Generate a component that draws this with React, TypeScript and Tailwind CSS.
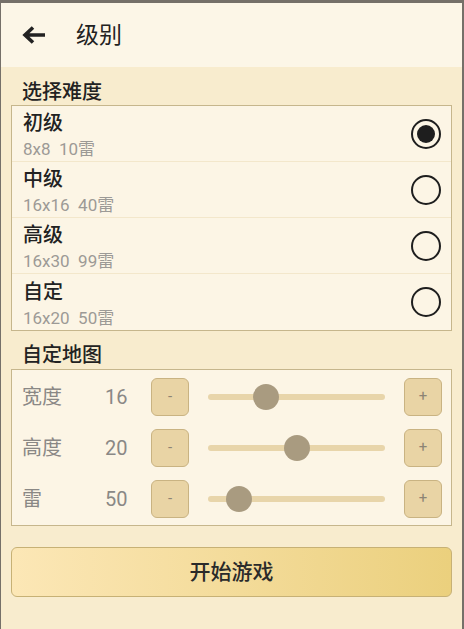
const levels = [
  { name: "初级", desc: "8x8  10雷", checked: true },
  { name: "中级", desc: "16x16  40雷", checked: false },
  { name: "高级", desc: "16x30  99雷", checked: false },
  { name: "自定", desc: "16x20  50雷", checked: false },
];

const sliders = [
  { label: "宽度", value: 16, pos: 0.3 },
  { label: "高度", value: 20, pos: 0.5 },
  { label: "雷", value: 50, pos: 0.12 },
];

function StepButton({ sign }: { sign: string }) {
  return (
    <button className="w-[38px] h-[38px] shrink-0 rounded-[6px] bg-[#e9d4a5] border border-[#c9b382] text-[#8d8474] text-[15px] leading-none flex items-center justify-center">
      {sign}
    </button>
  );
}

export default function App() {
  return (
    <div
      className="w-[464px] h-[629px] overflow-hidden flex flex-col bg-[#f8ecce] border-t-[3px] border-l border-r-2 border-[#757069]"
      style={{ fontFamily: 'Roboto, "Noto Sans CJK SC", sans-serif' }}
    >
      {/* Header */}
      <div className="h-[64px] shrink-0 bg-[#fcf6e7] flex items-center pl-[20px]">
        <svg width="26" height="20" viewBox="0 0 26 20" className="text-[#222]">
          <path d="M24 10H5M12 2.5L4 10l8 7.5" fill="none" stroke="currentColor" strokeWidth="3.6" />
        </svg>
        <span className="ml-[29px] text-[23px] leading-none text-[#222]">级别</span>
      </div>

      <div className="px-[10px] flex flex-col">
        {/* Difficulty */}
        <div className="mt-[13px] pl-[11px] text-[20px] leading-[25px] font-medium text-[#222]">选择难度</div>
        <div className="border border-[#c6b68c] bg-[#fcf5e5]">
          {levels.map((lv, i) => (
            <div
              key={lv.name}
              className={`h-[56px] flex items-center justify-between pl-[11px] pr-[10px] ${i < levels.length - 1 ? "border-b border-[#f3e7cb]" : ""}`}
            >
              <div className="flex flex-col gap-[3px] mt-[4px]">
                <span className="text-[20px] leading-[25px] font-medium text-[#222]">{lv.name}</span>
                <span className="text-[17px] leading-[21px] text-[#9c9a96] whitespace-pre">{lv.desc}</span>
              </div>
              <div className="w-[30px] h-[30px] rounded-full border-[2.5px] border-[#1e1e1e] flex items-center justify-center">
                {lv.checked && <div className="w-[18px] h-[18px] rounded-full bg-[#1e1e1e]" />}
              </div>
            </div>
          ))}
        </div>

        {/* Custom map */}
        <div className="mt-[12px] mb-[1px] pl-[11px] text-[20px] leading-[25px] font-medium text-[#222]">自定地图</div>
        <div className="border border-[#c6b68c] bg-[#fcf5e5] pt-[1px] pb-[1px]">
          {sliders.map((s) => (
            <div key={s.label} className="h-[51px] flex items-center pl-[10px] pr-[9px]">
              <span className="w-[83px] text-[20px] text-[#8a8885]">{s.label}</span>
              <span className="w-[46px] text-[20px] text-[#8a8885]">{s.value}</span>
              <StepButton sign="-" />
              <div className="flex-1 mx-[19px] relative h-[26px] flex items-center">
                <div className="w-full h-[6px] rounded-full bg-[#e8d5aa]" />
                <div
                  className="absolute top-0 w-[26px] h-[26px] rounded-full bg-[#a99b80]"
                  style={{ left: `calc(${s.pos} * (100% - 26px))` }}
                />
              </div>
              <StepButton sign="+" />
            </div>
          ))}
        </div>

        {/* Start */}
        <button className="mt-[21px] h-[50px] pt-[2px] rounded-[6px] border border-[#c7b175] bg-gradient-to-r from-[#fce7b6] to-[#ebd07d] text-[21px] font-medium text-[#2a2a2a]">
          开始游戏
        </button>
      </div>
    </div>
  );
}
